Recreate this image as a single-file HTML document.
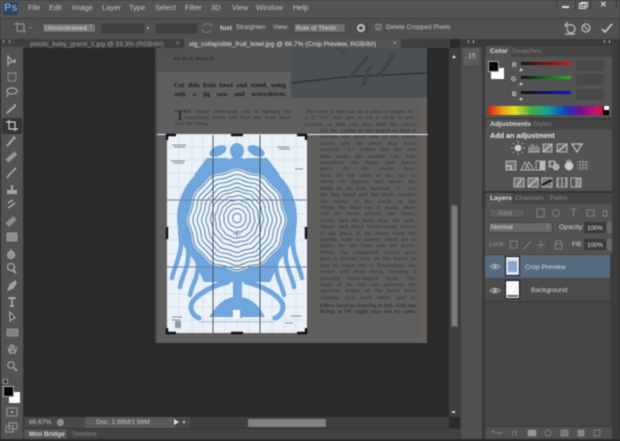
<!DOCTYPE html>
<html><head><meta charset="utf-8"><style>
html,body{margin:0;padding:0;background:#262626}
#w{position:relative;width:620px;height:441px;overflow:hidden;background:#2b2b2b;font:7px "Liberation Sans",sans-serif;color:#c8c8c8;filter:blur(.5px)}
#w div{position:absolute}
.t{white-space:nowrap;line-height:9px}
.m{top:3px;font-size:7.5px;color:#c4c4c4}
.l{color:#27282a;font:bold 5.7px/6.4px "Liberation Serif",serif;opacity:.6;text-align:justify;text-align-last:justify;white-space:nowrap;overflow:hidden}
svg{position:absolute;overflow:visible}
</style></head><body><div id="w">
<!-- menu -->
<div style="left:0;top:0;width:620px;height:18px;background:#545454"></div>
<div class="t" style="left:3px;top:2px;font:bold 11px/13px 'Liberation Sans';color:#6f9fd0;background:#31425a;padding:0 1px">Ps</div>
<div class="t m" style="left:28px">File</div><div class="t m" style="left:49px">Edit</div><div class="t m" style="left:72px">Image</div><div class="t m" style="left:102px">Layer</div><div class="t m" style="left:129px">Type</div><div class="t m" style="left:155px">Select</div><div class="t m" style="left:185px">Filter</div><div class="t m" style="left:211px">3D</div><div class="t m" style="left:232px">View</div><div class="t m" style="left:256px">Window</div><div class="t m" style="left:293px">Help</div>
<div style="left:556px;top:0;width:1px;height:9px;background:#3c3c3c"></div><div style="left:575px;top:0;width:1px;height:9px;background:#3c3c3c"></div><div style="left:590px;top:0;width:1px;height:9px;background:#3c3c3c"></div><div style="left:616px;top:0;width:1px;height:9px;background:#3c3c3c"></div>
<div style="left:562px;top:6px;width:7px;height:2px;background:#ddd"></div>
<div style="left:579px;top:3px;width:5px;height:4px;border:1px solid #ddd"></div><div style="left:581px;top:2px;width:5px;height:3px;border:1px solid #ddd"></div>
<div class="t" style="left:600px;top:0px;font:bold 8px/10px 'Liberation Sans';color:#ddd">✕</div>
<!-- options -->
<div style="left:0;top:18px;width:620px;height:21px;background:#505050;border-top:1px solid #3e3e3e;box-sizing:border-box"></div>
<svg style="left:14px;top:21px" width="14" height="14" fill="none" stroke="#8a8a8a" stroke-width="1.3"><path d="M3 1v9h9M0 3h10v9"/></svg>
<div style="left:29px;top:27px;width:3px;height:1px;background:#888"></div>
<div style="left:42px;top:23px;width:54px;height:10px;background:#747474;border:1px solid #424242;box-sizing:border-box"></div>
<div class="t" style="left:45px;top:23.5px;color:#e0e0e0;font-size:6.5px">Unconstrained</div><div class="t" style="left:90px;top:23px;color:#ddd;font-size:6px">⁝</div>
<div style="left:101px;top:23px;width:44px;height:11px;background:#3f3f3f;border:1px solid #474747;box-sizing:border-box"></div>
<div style="left:147px;top:27px;width:2px;height:2px;background:#aaa"></div>
<div style="left:155px;top:23px;width:43px;height:11px;background:#3f3f3f;border:1px solid #474747;box-sizing:border-box"></div>
<svg style="left:201px;top:22px" width="12" height="12" fill="none" stroke="#808080" stroke-width="1"><path d="M2 4a5 5 0 0 1 9 1M10 8a5 5 0 0 1-9-1"/></svg>
<div class="t" style="left:220px;top:24px;color:#d4d4d4;font-size:6.5px;font-weight:bold">fust</div>
<div class="t" style="left:236px;top:23px;color:#c4c4c4;font-size:6.5px">Straighten</div>
<div class="t" style="left:273px;top:23px;color:#c4c4c4;font-size:6.5px">View:</div>
<div style="left:293px;top:23px;width:53px;height:10px;background:#6e6e6e;border:1px solid #424242;box-sizing:border-box"></div>
<div class="t" style="left:296px;top:23.5px;color:#ddd;font-size:6.5px">Rule of Thirds</div>
<div style="left:357px;top:24px;width:4px;height:4px;border:2px solid #c4c4c4;border-radius:50%"></div>
<div style="left:366px;top:23px;width:1px;height:10px;background:#3f3f3f"></div>
<div class="t" style="left:375px;top:23px;color:#ccc;font-size:8px">☑</div>
<div class="t" style="left:386px;top:23px;color:#c4c4c4;font-size:6.5px">Delete Cropped Pixels</div>
<svg style="left:562px;top:20px" width="55" height="16" fill="none" stroke="#bdbdbd" stroke-width="1.2"><path d="M4 5h6a4 4 0 1 1-5 4M6 2 3 5l3 3M3 14h10"/><circle cx="24" cy="8" r="4"/><path d="M21 5l6 6"/><path d="M40 9l3 3 7-8" stroke-width="1.8"/></svg>
<!-- tabs -->
<div style="left:0;top:39px;width:450px;height:9px;background:#3f3f3f"></div>
<div style="left:3px;top:40px;width:5px;height:2px;border-left:1px dotted #aaa;border-right:1px dotted #aaa"></div>
<div class="t" style="left:30px;top:39.5px;color:#a0a0a0;font-size:6.6px">plastic_baby_grand_1.jpg @ 33.3% (RGB/8#)</div>
<div class="t" style="left:176px;top:39.5px;color:#aaa;font-size:6px">×</div>
<div style="left:184px;top:39px;width:217px;height:10px;background:#555"></div>
<div class="t" style="left:189px;top:39.5px;color:#e4e4e4;font-size:6.6px">xlg_collapsible_fruit_bowl.jpg @ 66.7% (Crop Preview, RGB/8#)</div>
<div class="t" style="left:393px;top:39.5px;color:#bbb;font-size:6px">×</div>
<!-- toolbar -->
<div style="left:0;top:39px;width:1px;height:402px;background:#333"></div>
<div style="left:1px;top:47px;width:22px;height:370px;background:#535353"></div>
<div style="left:1px;top:417px;width:22px;height:24px;background:#535353"></div>
<div style="left:23px;top:47px;width:1px;height:394px;background:#333"></div>
<div style="left:2px;top:118px;width:20px;height:16px;background:#353535"></div>
<svg style="left:0;top:0" width="24" height="441" fill="none" stroke="#a8a8a8" stroke-width="1.2">
<path d="M8 56v9l2-3 3 0zM13 61h3M15 59v4"/>
<rect x="8" y="73" width="8" height="8" stroke-dasharray="1.5 1.2"/>
<ellipse cx="12" cy="91" rx="5" ry="3"/><path d="M8 94l-1 3"/>
<path d="M7 113l8-7" stroke-width="2"/><path d="M14 104l2 2"/>
<path d="M9 120v9h9M6 122h9v9" stroke="#ccc"/>
<path d="M7 146l7-8" stroke-width="2"/><path d="M13 136l3 3"/>
<path d="M7 161l9-8" stroke-width="4" stroke="#989898"/>
<path d="M7 178l2-3 7-7" stroke-width="1.6"/>
<path d="M12 185v5M8 191h8v2H8z" stroke-width="2"/>
<path d="M8 208l7-5M8 203l5-3" stroke-width="1.4"/>
<path d="M7 225l8-7" stroke-width="5" stroke="#8e8e8e"/>
<rect x="7" y="233" width="10" height="8" fill="#8e8e8e" stroke="#b5b5b5" stroke-width=".6"/>
<circle cx="11" cy="255" r="3.5" fill="#8f8f8f"/><path d="M11 249v3"/>
<circle cx="11" cy="267" r="3.5"/><path d="M13 270l3 3" stroke-width="2"/>
<path d="M8 290l2-5 5-4 1 2-3 5z" fill="#a0a0a0"/>
<path d="M8 298h8M12 298v8M10 306h4" stroke-width="1.4" stroke="#bbb"/>
<path d="M10 312v9l2-2 3-1z" fill="#333"/>
<rect x="7" y="329" width="11" height="7" fill="#808080" stroke="#aaa" stroke-width=".6"/>
<path d="M8 348l2 5h5l2-6M10 352v-7M12 351v-7M14 351v-6"/>
<circle cx="11" cy="365" r="3.2"/><path d="M14 368l3 3" stroke-width="1.6"/>
<rect x="7" y="408" width="10" height="8" stroke="#909090"/><circle cx="12" cy="412" r="1.5" fill="#909090" stroke="none"/>
<rect x="9" y="423" width="8" height="6" stroke="#909090"/><rect x="6" y="426" width="7" height="6" stroke="#909090"/>
</svg>
<div style="left:3px;top:379px;width:5px;height:5px;background:#222;border:1px solid #999;box-sizing:border-box"></div>
<div style="left:9px;top:392px;width:11px;height:11px;background:#fff"></div>
<div style="left:3px;top:386px;width:11px;height:11px;background:#050505;border:1px solid #aaa;box-sizing:border-box"></div>
<!-- canvas -->
<div style="left:24px;top:48px;width:425px;height:369px;background:#2a2a2a"></div>
<!-- page -->
<div style="left:155px;top:48px;width:272px;height:295px;background:#5f5f5f;overflow:hidden">
<div style="left:0;top:0;width:2px;height:295px;background:#4a4a4a"></div>
<div style="left:2px;top:0;width:134px;height:24px;background:#505253"></div>
<div style="left:136px;top:0;width:136px;height:50px;background:#4c5054"></div>
<div style="left:265px;top:50px;width:7px;height:245px;background:#66605d"></div>
<svg style="left:0;top:0" width="272" height="60" fill="none" stroke="#2b2c2e"><path d="M136 35 190 29 272 25" stroke-width="1.3"/><path d="M195 30c6-8 10-12 18-22M208 38c3-8 4-14 8-20M222 28c6-5 12-12 16-22" stroke="#3f4247" stroke-width="3.5"/><path d="M190 6c-3-3-6-5-10-6" stroke="#45484c" stroke-width="4"/></svg>
</div>
<div class="t" style="left:174px;top:56px;font:bold 5px/7px 'Liberation Serif';color:#1c1c1c;opacity:.8">BY H. H. WALLIS</div>
<div class="l" style="left:174px;top:82px;width:112px;font-size:6.6px;line-height:8.6px;color:#0c0c0c;opacity:.85">Cut thin fruit bowl and stand, using<br>only a jig saw and screwdriver.</div>
<div class="t" style="left:175px;top:109px;font:bold 15px/15px 'Liberation Serif';color:#303030">T</div>
<div class="l" style="left:184px;top:109px;width:107px;">HE home craftsman who is looking for<br>something novel will find this fruit bowl</div>
<div class="t" style="left:175px;top:121px;font:bold 5.7px/7px 'Liberation Serif';color:#27282a;opacity:.6">just the thing.</div>
<div class="l" style="left:305px;top:109px;width:111px">The bowl is laid out on a piece of maple 11"<br>x 17"x¾" and saw to cut a circle in pro-<br>portion so that you may find the center</div>
<div class="l" style="left:320px;top:128px;width:96px">Set the radius of the pencil so that it<br>touches the outer rim of the whole<br>board and the piece may form<br>marked "A." Follow this line and<br>then make the outside cut. This<br>completes the flame and leaves<br>piece for the stand here.</div>
<div class="l" style="left:320px;top:173px;width:96px">Now tilt the table of the saw to<br>about 18 degrees and insert the<br>blade in the hole marked "A." Set<br>the fine hand and the blade reaches<br>the center of the wood, so the<br>When the final cut is made, there<br>will be three pieces: the flame,<br>center and the base near the ends.<br>Shape and drive bevel-round screws<br>to the piece of the forms from the<br>outside walls or sleeves which act as<br>glides for the base and the screw.</div>
<div class="l" style="left:320px;top:250px;width:96px">When the completed veneer part<br>goes is turned over, tie the leaves so<br>that its outer rim is Nothingam, the<br>center will drop down, forming a<br>graceful bowl-shaped bowl. The<br>angle of the saw cuts prevents the<br>separate ledges of the bowl from<br>slipping past each other and it.</div>
<div class="l" style="left:320px;top:303px;width:96px;opacity:.8">Fillow bowl in drawing at left, with one<br>fitting at 18° angle, may not be same.</div>
<div style="left:157px;top:134px;width:271px;height:1px;background:#e8e8e8"></div>
<!-- crop art -->
<svg style="left:167px;top:135px" width="140" height="198" viewBox="167 135 140 198">
<defs><path id="r" vector-effect="non-scaling-stroke" d="M47-6Q50 0 47 6Q44 12 43.5 18.5Q43 25 38 29Q33 33 29 38Q25 43 18.5 43.5Q12 44 6 47Q0 50-6 47Q-12 44-18.5 43.5Q-25 43-29 38Q-33 33-38 29Q-43 25-43.5 18.5Q-44 12-47 6Q-50 0-47-6Q-44-12-43.5-18.5Q-43-25-38-29Q-33-33-29-38Q-25-43-18.5-43.5Q-12-44-6-47Q0-50 6-47Q12-44 18.5-43.5Q25-43 29-38Q33-33 38-29Q43-25 43.5-18.5Q44-12 47-6Z"/></defs>
<rect x="167" y="135" width="140" height="198" fill="#eaf1f8"/>
<g stroke="#ccd6df" stroke-width=".5"><path d="M167 147h140M167 160h140M167 173h140M167 187h140M167 214h140M167 227h140M167 240h140M167 254h140M167 280h140M167 294h140M167 307h140M167 320h140M179 135v198M192 135v198M203 135v198M225 135v198M237 135v198M249 135v198M272 135v198M284 135v198M296 135v198"/></g>
<ellipse cx="237" cy="218" rx="60" ry="60" fill="#6fa6de"/>
<ellipse cx="237" cy="151" rx="7" ry="8" fill="#6fa6de"/>
<ellipse cx="218" cy="151" rx="9" ry="5" transform="rotate(-25 218 151)" fill="#6fa6de"/>
<ellipse cx="256" cy="151" rx="9" ry="5" transform="rotate(25 256 151)" fill="#6fa6de"/>
<path d="M207 158H267L280 175H194Z" fill="#6fa6de"/>
<path d="M193 258H281L270 282H204Z" fill="#6fa6de"/>
<rect x="233" y="275" width="9" height="43" fill="#6fa6de"/>
<path d="M209 317C215 308 222 298 235 297H240C252 298 258 305 265 317Z" fill="#6fa6de"/>
<path d="M227 156l3 3M247 156l-3 3" stroke="#eaf1f8" stroke-width="1.5"/>
<g fill="none" stroke="#6fa6de" stroke-width="4.5" stroke-linecap="round">
<path d="M180 232C184 250 176 262 172 278M188 250C190 265 182 275 180 287M198 265C198 278 192 285 190 295"/>
<path d="M294 232C290 250 298 262 302 278M286 250C284 265 292 275 294 287M276 265C276 278 282 285 284 295"/>
<path d="M228 282C210 286 190 298 191 308C192 314 196 317 199 318" stroke-width="5"/>
<path d="M246 282C264 286 284 298 283 308C282 314 278 317 275 318" stroke-width="5"/>
</g>
<rect x="233" y="310" width="7" height="8" fill="#f4f6f8"/>
<path d="M199 322H275" stroke="#7f95a8" stroke-width=".5"/>
<use href="#r" transform="translate(237 220) scale(1.03 1.06)" fill="#e9f2fa"/>
<g fill="none" stroke="#4f7596" stroke-width=".9">
<use href="#r" transform="translate(237 220) scale(1 1.03)"/>
<use href="#r" transform="translate(237 220) scale(.91 .94)"/>
<use href="#r" transform="translate(237 220) scale(.82 .85)"/>
<use href="#r" transform="translate(237 220) scale(.73 .76)"/>
<use href="#r" transform="translate(237 220) scale(.64 .67)"/>
<use href="#r" transform="translate(237 219) scale(.55 .58)"/>
<use href="#r" transform="translate(237 219) scale(.46 .49) rotate(6)"/>
<use href="#r" transform="translate(237 219) scale(.37 .4) rotate(6)"/>
<use href="#r" transform="translate(237 218) scale(.28 .3) rotate(12)"/>
<use href="#r" transform="translate(237 218) scale(.19 .2) rotate(12)"/>
<use href="#r" transform="translate(237 218) scale(.09 .1)"/>
</g>
<path d="M233 234h8M237 230v8" stroke="#6f8598" stroke-width=".7"/>
<g fill="none" stroke="#5b7288" stroke-width=".7"><path d="M172 145h14M174 147h11M171 161h14M173 163h11M277 147h12M279 149h11M295 169h8M172 317h10M172 320h8M291 316h10M285 323h8"/></g>
<rect x="175" y="321" width="6" height="7" fill="#8d99a3"/>
<path d="M213 135v198M260 135v198" stroke="#46525c" stroke-width="1"/>
<path d="M167 200h140M167 267h140" stroke="#75838f" stroke-width="1"/>
</svg>
<!-- crop handles -->
<svg style="left:160px;top:128px" width="155" height="212" fill="none" stroke="#111" stroke-width="2.4">
<path d="M7 12V7h9M146 12V7h-9M7 200v5h9M146 200v5h-9M71 7h12M71 205h12M7 99v12M146 99v12"/>
</svg>
<!-- v scrollbar -->
<div style="left:449px;top:48px;width:11px;height:369px;background:#3e3e3e"></div>
<div style="left:451px;top:205px;width:7px;height:122px;background:#7c7c7c;border:1px solid #5a5a5a;box-sizing:border-box"></div>
<div style="left:452px;top:53px;width:0;height:0;border:2px solid transparent;border-bottom:3px solid #ddd"></div>
<div style="left:452px;top:411px;width:3px;height:2px;background:#ccc"></div>
<!-- status -->
<div style="left:24px;top:417px;width:425px;height:11px;background:#494949"></div>
<div style="left:85px;top:417px;width:90px;height:11px;background:#5a5a5a"></div>
<div class="t" style="left:29px;top:418px;color:#c4c4c4;font-size:6.6px">66.67%</div>
<div style="left:57px;top:419px;width:7px;height:7px;border-radius:50%;background:#8d8d8d"></div>
<div class="t" style="left:96px;top:418px;color:#c4c4c4;font-size:6.6px">Doc: 1.98M/1.98M</div>
<div style="left:174px;top:419px;width:0;height:0;border:3px solid transparent;border-left:5px solid #ddd"></div>
<div style="left:183px;top:421px;width:2px;height:2px;background:#ccc"></div>
<div style="left:190px;top:417px;width:259px;height:11px;background:#3f3f3f"></div>
<div style="left:248px;top:419px;width:78px;height:8px;background:#808080"></div>
<div style="left:24px;top:428px;width:600px;height:1px;background:#333"></div>
<div style="left:24px;top:429px;width:437px;height:10px;background:#424242"></div>
<div style="left:24px;top:429px;width:43px;height:10px;background:#555"></div>
<div class="t" style="left:29px;top:430px;color:#d4d4d4;font-size:6.6px;font-weight:bold">Mini Bridge</div>
<div class="t" style="left:72px;top:430px;color:#888;font-size:6.6px">Timeline</div>
<div style="left:0;top:439px;width:620px;height:2px;background:#2a2a2a"></div>
<!-- dock column -->
<div style="left:460px;top:39px;width:160px;height:400px;background:#3a3a3a"></div>
<div style="left:461px;top:47px;width:21px;height:392px;background:#505050"></div>
<div style="left:462px;top:47px;width:19px;height:20px;background:#5c5c5c;border:1px solid #454545;box-sizing:border-box"></div>
<div class="t" style="left:468px;top:52px;color:#c4c4c4;font-size:7px">15</div>
<div style="left:468px;top:40px;width:4px;height:2px;border-left:1px dotted #bbb;border-right:1px dotted #bbb"></div>
<div style="left:604px;top:40px;width:4px;height:2px;border-left:1px dotted #bbb;border-right:1px dotted #bbb"></div>
<!-- right panels -->
<div style="left:485px;top:46px;width:127px;height:393px;background:#535353"></div>
<div style="left:612px;top:39px;width:8px;height:400px;background:#3c3c3c"></div>
<!-- color -->
<div style="left:485px;top:46px;width:127px;height:11px;background:#454545"></div>
<div style="left:486px;top:46px;width:25px;height:11px;background:#535353"></div>
<div class="t" style="left:490px;top:47px;color:#dcdcdc;font-weight:bold;font-size:6.8px">Color</div>
<div class="t" style="left:512px;top:47px;color:#858585;font-size:6.8px">Swatches</div>
<div style="left:491px;top:68px;width:13px;height:11px;background:#fff"></div>
<div style="left:488px;top:61px;width:11px;height:11px;background:#050505;border:1px solid #aaa;box-sizing:border-box"></div>
<div style="left:521px;top:62px;width:50px;height:3px;background:linear-gradient(90deg,#111,#d11)"></div>
<div style="left:521px;top:76px;width:50px;height:3px;background:linear-gradient(90deg,#111,#2b2)"></div>
<div style="left:521px;top:91px;width:50px;height:3px;background:linear-gradient(90deg,#111,#11c)"></div>
<div class="t" style="left:512px;top:61px;color:#d4d4d4;font-size:6.5px;font-weight:bold">R</div>
<div class="t" style="left:511px;top:75px;color:#d4d4d4;font-size:6.5px;font-weight:bold">G</div>
<div class="t" style="left:512px;top:90px;color:#d4d4d4;font-size:6.5px;font-weight:bold">B</div>
<div style="left:519px;top:66px;width:0;height:0;border:2px solid transparent;border-bottom:3px solid #ccc"></div>
<div style="left:519px;top:80px;width:0;height:0;border:2px solid transparent;border-bottom:3px solid #ccc"></div>
<div style="left:519px;top:95px;width:0;height:0;border:2px solid transparent;border-bottom:3px solid #ccc"></div>
<div style="left:576px;top:60px;width:28px;height:11px;background:#484848"></div>
<div style="left:576px;top:74px;width:28px;height:11px;background:#484848"></div>
<div style="left:576px;top:89px;width:28px;height:11px;background:#484848"></div>
<div style="left:488px;top:106px;width:121px;height:9px;background:linear-gradient(90deg,#d81c1c 0,#e8a010 12%,#e6e020 22%,#3fb03f 36%,#10a0a0 50%,#1040c0 64%,#701090 76%,#d01070 90%,#d01030 95%,#000 95%)"></div>
<div style="left:604px;top:106px;width:5px;height:4px;background:#fff"></div>
<div style="left:604px;top:110px;width:5px;height:5px;background:#000"></div>
<!-- adjustments -->
<div style="left:485px;top:118px;width:127px;height:1px;background:#333"></div>
<div style="left:485px;top:119px;width:127px;height:11px;background:#454545"></div>
<div style="left:486px;top:119px;width:43px;height:11px;background:#535353"></div>
<div class="t" style="left:490px;top:120px;color:#dcdcdc;font-weight:bold;font-size:6.8px">Adjustments</div>
<div class="t" style="left:533px;top:120px;color:#858585;font-size:6.8px">Styles</div>
<div class="t" style="left:490px;top:131px;color:#e8e8e8;font-weight:bold;font-size:7.2px">Add an adjustment</div>
<svg style="left:480px;top:140px" width="130" height="50" fill="none" stroke="#b4b4b4" stroke-width="1">
<circle cx="38" cy="8" r="3" fill="#d0d0d0"/><path d="M38 1v2M38 13v2M31 8h2M43 8h2M33 3l1 1M42 12l1 1M33 13l1-1M42 4l1-1"/>
<path d="M48 12h12M49 12V7M51 12V5M53 12V4M55 12V6M57 12V5M59 12V7"/>
<rect x="63" y="4" width="9" height="8" fill="#777"/><path d="M63 12l9-8" stroke="#ddd"/>
<rect x="77" y="4" width="10" height="8" fill="#666"/><path d="M77 11c4 0 5-5 10-6" stroke="#ddd"/>
<path d="M92 4h10l-5 8z" stroke-width="1.4"/>
<rect x="26" y="21" width="10" height="9" fill="#777"/><path d="M26 26h5v4" stroke="#ddd"/>
<path d="M41 30l4-8 5 8zM45 30l4-8 5 8z"/>
<rect x="56" y="21" width="9" height="9"/><rect x="60" y="21" width="5" height="9" fill="#bbb"/>
<circle cx="73" cy="24" r="3"/><circle cx="76" cy="27" r="3" fill="#aaa"/><rect x="69" y="21" width="5" height="6"/>
<circle cx="89" cy="26" r="4" fill="#ccc"/><path d="M86 22l3-2 3 2"/>
<path d="M97 22h12M97 25h12M97 28h12M100 21v9M103 21v9M106 21v9" stroke-dasharray="1 1"/>
<rect x="34" y="38" width="10" height="9" fill="#777"/><path d="M37 46l5-7" stroke="#ddd"/>
<rect x="48" y="38" width="10" height="9" fill="#777"/><path d="M48 47l10-9" stroke="#ddd"/>
<rect x="62" y="38" width="10" height="9" fill="#777"/><path d="M62 45l10-5" stroke="#111" stroke-width="2"/>
<rect x="77" y="38" width="10" height="9" fill="#888"/><path d="M80 38v9M84 38v9" stroke="#333"/>
<rect x="91" y="38" width="10" height="9"/><rect x="96" y="38" width="5" height="9" fill="#888"/>
</svg>
<!-- layers -->
<div style="left:485px;top:191px;width:127px;height:2px;background:#333"></div>
<div style="left:485px;top:193px;width:127px;height:11px;background:#454545"></div>
<div style="left:486px;top:193px;width:26px;height:11px;background:#535353"></div>
<div class="t" style="left:490px;top:194px;color:#dcdcdc;font-weight:bold;font-size:6.8px">Layers</div>
<div class="t" style="left:515px;top:194px;color:#8a8a8a;font-size:6.8px">Channels</div>
<div class="t" style="left:550px;top:194px;color:#8a8a8a;font-size:6.8px">Paths</div>
<div style="left:489px;top:208px;width:36px;height:10px;background:#5d5d5d;border:1px solid #484848;box-sizing:border-box"></div>
<div class="t" style="left:499px;top:208.5px;color:#999;font-size:6.5px">Kind</div>
<svg style="left:530px;top:207px" width="80" height="12" fill="none" stroke="#808080"><rect x="7" y="2" width="7" height="8"/><circle cx="26" cy="6" r="3.5"/><path d="M40 2h7M43.5 2v8"/><rect x="57" y="3" width="7" height="6"/><path d="M73 9V4h4v5z"/></svg>
<div style="left:488px;top:222px;width:65px;height:11px;background:#6a6a6a;border:1px solid #444;box-sizing:border-box"></div>
<div class="t" style="left:491px;top:223px;color:#d8d8d8;font-size:6.8px">Normal</div>
<div class="t" style="left:547px;top:223px;color:#ddd;font-size:6px">⁝</div>
<div class="t" style="left:559px;top:223px;color:#d8d8d8;font-size:6.8px">Opacity:</div>
<div style="left:584px;top:222px;width:22px;height:11px;background:#3a3a3a"></div>
<div class="t" style="left:587px;top:224px;color:#e0e0e0;font-size:6.2px">100%</div>
<div style="left:607px;top:222px;width:5px;height:11px;background:#6a6a6a"></div>
<div class="t" style="left:489px;top:240px;color:#999;font-size:6.8px">Lock:</div>
<svg style="left:508px;top:239px" width="70" height="12" fill="none" stroke="#808080"><rect x="2" y="2" width="7" height="7"/><path d="M16 10l7-8M33 2v8M29 6h8M48 5V2h5v3M47 5h7v5h-7z"/></svg>
<div class="t" style="left:572px;top:240px;color:#d8d8d8;font-size:6.8px">Fill:</div>
<div style="left:584px;top:239px;width:22px;height:11px;background:#3a3a3a"></div>
<div class="t" style="left:587px;top:241px;color:#e0e0e0;font-size:6.2px">100%</div>
<div style="left:607px;top:239px;width:5px;height:11px;background:#6a6a6a"></div>
<div style="left:485px;top:254px;width:127px;height:174px;background:#464646"></div>
<div style="left:485px;top:255px;width:125px;height:23px;background:#566a80"></div>
<div style="left:485px;top:279px;width:125px;height:22px;background:#4c4c4c"></div>
<div style="left:505px;top:255px;width:1px;height:46px;background:#3f3f3f"></div>
<div style="left:485px;top:301px;width:125px;height:1px;background:#3a3a3a"></div>
<svg style="left:489px;top:262px" width="12" height="50" fill="none" stroke="#a8a8a8"><path d="M1 4.5Q6 0 11 4.5Q6 9 1 4.5z"/><circle cx="6" cy="4.5" r="1.5" fill="#a8a8a8"/><path d="M1 28.5Q6 24 11 28.5Q6 33 1 28.5z"/><circle cx="6" cy="28.5" r="1.5" fill="#a8a8a8"/></svg>
<div style="left:505px;top:256px;width:15px;height:20px;background:#dfe7ef;border:1px solid #111;box-sizing:border-box"></div>
<div style="left:508px;top:261px;width:9px;height:11px;background:#86a9cf"></div>
<div style="left:505px;top:280px;width:15px;height:19px;background:#f8f8f8;border:1px solid #111;box-sizing:border-box"></div>
<div style="left:507px;top:295px;width:11px;height:2px;background:#666"></div>
<div class="t" style="left:525px;top:263px;color:#d8d8e0;font-size:6.8px">Crop Preview</div>
<div class="t" style="left:531px;top:286px;color:#d4d4d4;font-size:6.8px">Background</div>
<div style="left:610px;top:255px;width:2px;height:173px;background:#3d3d3d"></div>
<div style="left:485px;top:426px;width:127px;height:1px;background:#3a3a3a"></div>
<div style="left:485px;top:427px;width:127px;height:12px;background:#505050"></div>
<svg style="left:490px;top:428px" width="115" height="10" fill="none" stroke="#808080"><path d="M4 5h7M2 5a2 2 0 0 1 3-2M13 5a2 2 0 0 0-3 2"/><path d="M22 8l2-6M26 8V2"/><rect x="38" y="2" width="8" height="6" fill="#999"/><circle cx="58" cy="5" r="3"/><path d="M71 2h7v6h-7z" fill="#777"/><rect x="88" y="2" width="6" height="6" fill="#888"/><rect x="104" y="2" width="6" height="6"/></svg>
</div></body></html>
